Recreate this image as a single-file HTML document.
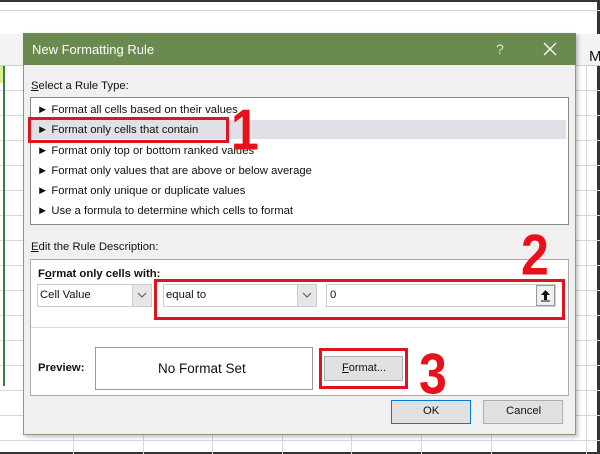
<!DOCTYPE html>
<html><head><style>
body{margin:0;width:600px;height:454px;position:relative;overflow:hidden;background:#fff;font-family:"Liberation Sans",sans-serif;}
.a{position:absolute;box-sizing:border-box;}
.t{position:absolute;font-size:11.3px;color:#111;white-space:nowrap;}
.red{position:absolute;box-sizing:border-box;border:3px solid #e0141c;}
.num{position:absolute;color:#e8101a;font-weight:bold;font-size:50px;line-height:1;font-family:"Liberation Sans Narrow","Liberation Sans",sans-serif;transform:scaleY(1.15);transform-origin:top left;}
</style></head><body>
<div class="a" style="left:0;top:0;width:600px;height:2px;background:#333"></div>
<div class="a" style="left:597px;top:0;width:3px;height:454px;background:#333"></div>
<div class="a" style="left:0;top:452px;width:600px;height:2px;background:#333"></div>
<div class="a" style="left:0;top:10px;width:600px;height:1px;background:#d0d0d0"></div>
<div class="a" style="left:0;top:34px;width:600px;height:32px;background:#f3f3f3;border-bottom:1px solid #ccc"></div>
<div class="t" style="left:589px;top:48px;font-size:15px">M</div>
<svg class="a" style="left:0;top:66px" width="600" height="388">
<g stroke="#d8d8d8" stroke-width="1">
<line x1="0" y1="24.5" x2="600" y2="24.5"/><line x1="0" y1="49.5" x2="600" y2="49.5"/><line x1="0" y1="74.5" x2="600" y2="74.5"/><line x1="0" y1="99.5" x2="600" y2="99.5"/><line x1="0" y1="124.5" x2="600" y2="124.5"/><line x1="0" y1="149.5" x2="600" y2="149.5"/><line x1="0" y1="174.5" x2="600" y2="174.5"/><line x1="0" y1="199.5" x2="600" y2="199.5"/><line x1="0" y1="224.5" x2="600" y2="224.5"/><line x1="0" y1="249.5" x2="600" y2="249.5"/><line x1="0" y1="274.5" x2="600" y2="274.5"/><line x1="0" y1="299.5" x2="600" y2="299.5"/><line x1="0" y1="324.5" x2="600" y2="324.5"/><line x1="0" y1="349.5" x2="600" y2="349.5"/><line x1="0" y1="374.5" x2="600" y2="374.5"/>
<line x1="73.5" y1="0" x2="73.5" y2="388"/><line x1="143.5" y1="0" x2="143.5" y2="388"/><line x1="212.5" y1="0" x2="212.5" y2="388"/><line x1="282.5" y1="0" x2="282.5" y2="388"/><line x1="351.5" y1="0" x2="351.5" y2="388"/><line x1="421.5" y1="0" x2="421.5" y2="388"/><line x1="491.5" y1="0" x2="491.5" y2="388"/><line x1="586.5" y1="0" x2="586.5" y2="388"/>
</g></svg>
<div class="a" style="left:0;top:66px;width:4px;height:17px;background:#d4f08a"></div>
<div class="a" style="left:3px;top:66px;width:2px;height:320px;background:#3f7a4a"></div>
<div class="a" style="left:23px;top:33px;width:553px;height:402px;background:#f0f0f0;border:1px solid #8a9c7c;box-shadow:2px 2px 4px rgba(0,0,0,.25)"></div>
<div class="a" style="left:23px;top:33px;width:553px;height:32px;background:#6a8a4f"></div>
<div class="t" style="left:32px;top:42px;font-size:13px;color:#fff">New Formatting Rule</div>
<div class="t" style="left:496px;top:41px;font-size:14px;color:#dde6d6">?</div>
<svg class="a" style="left:543px;top:42px" width="14" height="14"><path d="M1 1L13 13M13 1L1 13" stroke="#fff" stroke-width="1.3"/></svg>
<div class="t" style="left:31px;top:80px"><u>S</u>elect a Rule Type:</div>
<div class="a" style="left:30px;top:97px;width:539px;height:128px;background:#fff;border:1px solid #888"></div>
<div class="a" style="left:31px;top:120px;width:535px;height:19px;background:#e0e0e6"></div>
<div class="t" style="left:37px;top:104px">► Format all cells based on their values</div>
<div class="t" style="left:37px;top:124px">► Format only cells that contain</div>
<div class="t" style="left:37px;top:145px">► Format only top or bottom ranked values</div>
<div class="t" style="left:37px;top:165px">► Format only values that are above or below average</div>
<div class="t" style="left:37px;top:185px">► Format only unique or duplicate values</div>
<div class="t" style="left:37px;top:205px">► Use a formula to determine which cells to format</div>
<div class="red" style="left:28px;top:117px;width:201px;height:26px"></div>
<div class="num" style="left:231px;top:101px">1</div>
<div class="t" style="left:31px;top:241px"><u>E</u>dit the Rule Description:</div>
<div class="a" style="left:30px;top:259px;width:539px;height:137px;background:#fff;border:1px solid #aaa"></div>
<div class="a" style="left:31px;top:327px;width:537px;height:1px;background:#ddd"></div>
<div class="t" style="left:38px;top:268px;font-weight:bold">F<u>o</u>rmat only cells with:</div>
<div class="a" style="left:37px;top:284px;width:115px;height:23px;background:#fff;border:1px solid #ccc"></div>
<div class="t" style="left:40px;top:289px">Cell Value</div>
<div class="a" style="left:132px;top:285px;width:19px;height:21px;background:#e6e6e6;border-left:1px solid #ccc"></div>
<svg class="a" style="left:137px;top:292px" width="10" height="6"><path d="M1 1L5 5L9 1" stroke="#555" fill="none"/></svg>
<div class="a" style="left:163px;top:284px;width:154px;height:23px;background:#fff;border:1px solid #ccc"></div>
<div class="t" style="left:166px;top:289px">equal to</div>
<div class="a" style="left:297px;top:285px;width:19px;height:21px;background:#e6e6e6;border-left:1px solid #ccc"></div>
<svg class="a" style="left:302px;top:292px" width="10" height="6"><path d="M1 1L5 5L9 1" stroke="#555" fill="none"/></svg>
<div class="a" style="left:326px;top:284px;width:230px;height:23px;background:#fff;border:1px solid #ccc"></div>
<div class="t" style="left:330px;top:289px">0</div>
<div class="a" style="left:536px;top:285px;width:19px;height:21px;background:#f0f0f0;border:1px solid #999"></div>
<svg class="a" style="left:540px;top:289px" width="11" height="13"><path d="M5.5 1L1 6H4V11H7V6H10Z" fill="#111"/><line x1="1" y1="12" x2="10" y2="12" stroke="#111"/></svg>
<div class="red" style="left:154px;top:279px;width:411px;height:41px"></div>
<div class="num" style="left:521px;top:226px">2</div>
<div class="t" style="left:38px;top:362px;font-weight:bold">Preview:</div>
<div class="a" style="left:95px;top:347px;width:218px;height:43px;background:#fff;border:1px solid #999"></div>
<div class="t" style="left:158px;top:361px;font-size:13.5px">No Format Set</div>
<div class="a" style="left:324px;top:356px;width:79px;height:25px;background:#e1e1e1;border:1px solid #adadad"></div>
<div class="t" style="left:342px;top:362px;font-size:11px"><u>F</u>ormat...</div>
<div class="red" style="left:319px;top:348px;width:89px;height:41px"></div>
<div class="num" style="left:419px;top:345px">3</div>
<div class="a" style="left:391px;top:400px;width:80px;height:24px;background:#e1e1e1;border:1px solid #0078d7"></div>
<div class="t" style="left:423px;top:405px">OK</div>
<div class="a" style="left:483px;top:400px;width:80px;height:24px;background:#e1e1e1;border:1px solid #adadad"></div>
<div class="t" style="left:506px;top:405px">Cancel</div>
</body></html>
